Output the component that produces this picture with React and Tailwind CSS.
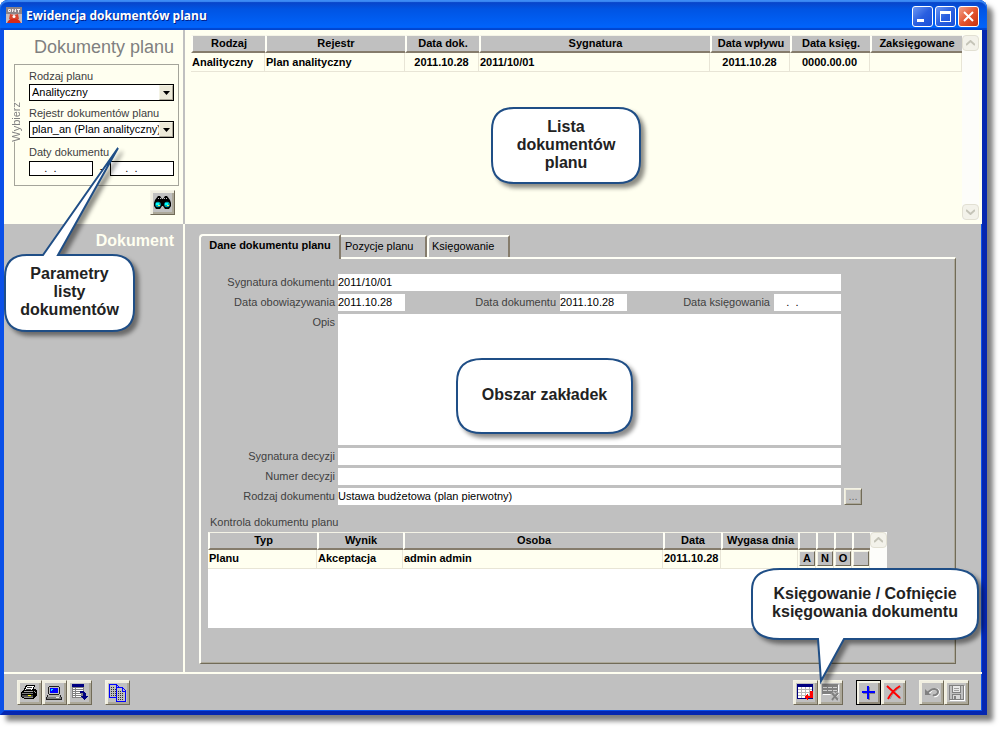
const FIELD =
  "h-[17px] min-w-0 rounded-none bg-white text-[11px] leading-4 text-black outline-none";

const DOCUMENTS = [
  {
    kind: "Analityczny",
    register: "Plan analityczny",
    date: "2011.10.28",
    signature: "2011/10/01",
    received: "2011.10.28",
    posted: "0000.00.00",
  },
];

const CHECKS = [
  {
    type: "Planu",
    result: "Akceptacja",
    person: "admin admin",
    date: "2011.10.28",
  },
];

const AppIcon = () => (
  <svg width="16" height="16" viewBox="0 0 16 16" aria-hidden="true">
    <rect width="16" height="16" fill="#8d8387" />
    <path d="M0 7h16v9H0z" fill="#c9bcbc" />
    <path d="M1 16c1-3 4-5 7-5s6 2 7 5z" fill="#d62a1a" />
    <path d="M4 7l4 1 4-1 1 5H3z" fill="#d8452f" />
    <circle cx="8" cy="9.500" r="1.500" fill="#fff" />
    <path
      d="M2.500 2.500h2v2h-2zM6.500 5V2l3 3V2M11 2.500h3M12.500 2v3.500"
      fill="none"
      stroke="#f3eded"
    />
  </svg>
);

const BinocularsIcon = () => (
  <svg width="17" height="13" viewBox="0 0 17 13" aria-hidden="true">
    <path
      d="M4 0h2l2 3h1l2-3h2l3 4 1 3v3l-2 3h-4l-2-3H8l-2 3H2l-2-3V7l1-3z"
      fill="#000"
    />
    <circle cx="4" cy="8.500" r="2.800" fill="#00a8b0" />
    <circle cx="13" cy="8.500" r="2.800" fill="#00a8b0" />
    <path d="M2 7h3v2H2zM11 7h3v2h-3z" fill="#0ff" />
    <path d="M4 9h2v1H4zM13 9h2v1h-2z" fill="#e8e860" />
    <path d="M4 2h1v1H4zM6 2h1v1H6zM10 2h1v1h-1zM12 2h1v1h-1z" fill="#c0c0c0" />
  </svg>
);

const PrinterIcon = () => (
  <svg width="17" height="15" viewBox="0 0 17 15" shapeRendering="crispEdges" aria-hidden="true">
    <path d="M5 0h9v2h-1v2h2v1h1v6h-1v1h-1v1h-1v1H3v-1H1v-1H0V7h1V6h1V5h1V3h1V1h1z" fill="#000" />
    <path d="M6 1h7v1h-1v2h-1v1H4V4h1V2h1z" fill="#fff" />
    <path d="M6 2h5v1H6zM5 4h5v1H5z" fill="#404040" />
    <path d="M3 6h9v1H3zM13 6h1v1h-1zM14 7h1v1h-1z" fill="#a0a0a0" />
    <path d="M1 8h11v1H1z" fill="#808080" />
    <path d="M1 10h11v2H1z" fill="#505050" />
    <path d="M7 10h3v1H7z" fill="#ff0" />
    <path d="M3 12h9v1H3z" fill="#909090" />
  </svg>
);

const ComputerIcon = () => (
  <svg width="17" height="14" viewBox="0 0 17 14" shapeRendering="crispEdges" aria-hidden="true">
    <path d="M3 0h10v1h1v7h-1v1h2v2h1v3H0v-3h1V9h2V8H2V1h1z" fill="#202020" />
    <path d="M3 1h10v7H3z" fill="#c0c0c0" />
    <path d="M4 2h8v5H4z" fill="#00f" />
    <path d="M5 3h2v1H6v1H5z" fill="#0ff" />
    <path d="M2 9h12v2H2z" fill="#b0b0b0" />
    <path d="M1 11h14v2H1z" fill="#808080" />
    <path d="M10 11h3v1h-3z" fill="#e8e8e8" />
  </svg>
);

const TableArrowIcon = () => (
  <svg width="17" height="17" viewBox="0 0 17 17" shapeRendering="crispEdges" aria-hidden="true">
    <path d="M1 3h12v11H1z" fill="#808080" />
    <path
      d="M2 4h2v1H2zM5 4h7v1H5zM2 6h2v1H2zM5 6h7v1H5zM2 8h2v1H2zM5 8h4v1H5zM2 10h2v1H2zM5 10h5v1H5zM2 12h2v1H2zM5 12h5v1H5z"
      fill="#fff"
    />
    <path d="M1 0h12v3H1z" fill="#000080" />
    <path d="M9 7h4v1h1v1h1v3h2v1h-1v1h-1v1h-1v1h-1v-1h-1v-1h-1v-1h-1v-1h2V9H9z" fill="#000080" />
  </svg>
);

const CopyIcon = () => (
  <svg width="18" height="18" viewBox="0 0 18 18" shapeRendering="crispEdges" aria-hidden="true">
    <path d="M.5.500h7l3 3v10H.500z" fill="#c0c0c0" stroke="#00f" />
    <path d="M7 1v3h3" fill="none" stroke="#00f" />
    <path d="M2 3.500h4M2 5.500h5M2 7.500h5M2 9.500h5M2 11.500h5" stroke="#303030" strokeDasharray="1 1" />
    <path d="M7.500 3.500h6l3 3v11h-9z" fill="#c0c0c0" stroke="#00f" />
    <path d="M13 4v3h4" fill="none" stroke="#00f" />
    <path d="M9 7.500h3M9 9.500h6M9 11.500h6M9 13.500h6M9 15.500h6" stroke="#303030" strokeDasharray="1 1" />
  </svg>
);

const PostIcon = () => (
  <svg width="17" height="17" viewBox="0 0 17 17" shapeRendering="crispEdges" aria-hidden="true">
    <path d="M0 0h16v15H0z" fill="#000080" />
    <path d="M1 3h14v11H1z" fill="#fff" />
    <path d="M1 5.500h14M1 8.500h14M1 11.500h14M4.500 3v11M8.500 3v11M12.500 3v11" stroke="#b8b8b8" />
    <path d="M13 7h3v7h-5v2h-1v-1H9v-1H8v-2h1v-1h1v-1h1v2h2z" fill="#f00" />
  </svg>
);

const UnpostIcon = () => (
  <svg width="18" height="17" viewBox="0 0 18 17" aria-hidden="true">
    <g shapeRendering="crispEdges">
      <path d="M1 1h16v10H1z" fill="#fff" />
      <path d="M0 0h16v10H0z" fill="#808080" />
      <path d="M1 3h4v1H1zM6 3h4v1H6zM11 3h4v1h-4zM1 6h4v1H1zM6 6h4v1H6zM11 6h4v1h-4z" fill="#d0d0d0" />
    </g>
    <path d="M10 9l7 7M17 9l-7 7" stroke="#c0c0c0" strokeWidth="5" />
    <path d="M11 10l6 6M17 10l-6 6" stroke="#fff" strokeWidth="1" />
    <path d="M10 9l6 7M16 9l-6 7" stroke="#808080" strokeWidth="2" />
  </svg>
);

const PlusIcon = () => (
  <svg width="15" height="15" viewBox="0 0 15 15" shapeRendering="crispEdges" aria-hidden="true">
    <path d="M7 2h2v5h5v2H9v6H7V9H2V7h5z" fill="#808080" />
    <path d="M6 1h2v5h6v2H8v6H6V8H1V6h5z" fill="#00f" />
  </svg>
);

const DeleteIcon = () => (
  <svg width="16" height="15" viewBox="0 0 16 15" aria-hidden="true">
    <path d="M3 3l12 11M15 2C10 5 6 9 4 14" stroke="#909090" strokeWidth="1" fill="none" />
    <path d="M1 1l13 12M14 1C9 4 5 8 2 14" stroke="#f00" strokeWidth="2" fill="none" />
  </svg>
);

const UndoIcon = () => (
  <svg width="16" height="11" viewBox="0 0 16 11" aria-hidden="true">
    <path d="M4 7l4-4c3-2 7-1 7 2 0 3-3 5-5 4" stroke="#fff" strokeWidth="2" fill="none" />
    <path d="M3 6l4-3c3-2 7-1 7 2 0 2-3 4-5 3" stroke="#808080" strokeWidth="2" fill="none" />
    <path d="M1 2v6h6z" fill="#808080" />
  </svg>
);

const SaveIcon = () => (
  <svg width="16" height="16" viewBox="0 0 16 16" shapeRendering="crispEdges" aria-hidden="true">
    <path d="M1.500 1.500h14v14h-14z" fill="none" stroke="#fff" />
    <path d="M.5.500h14v14H.500z" fill="#c0c0c0" stroke="#808080" />
    <path d="M3.500 1v6h8V1" fill="#e8e8e8" stroke="#808080" />
    <path d="M5 3.500h5M5 5.500h5" stroke="#a0a0a0" />
    <path d="M3 9h9v6H3z" fill="#808080" />
    <path d="M4 10h7v4H4z" fill="#d8d8d8" />
    <path d="M5 11h2v4H5z" fill="#808080" />
  </svg>
);

const ToolButton = ({ label, focused, children }) => (
  <button
    type="button"
    aria-label={label}
    className={`flex size-[25px] items-center justify-center bg-[#c0c0c0] ${
      focused
        ? "border border-black shadow-[inset_2px_2px_#f4f3e6,inset_-2px_-2px_#8f8878]"
        : "border border-t-[#f4f3e6] border-l-[#f4f3e6] border-r-[#716b58] border-b-[#716b58] shadow-[inset_2px_2px_#f0eee0,inset_-2px_-2px_#aca899]"
    }`}
  >
    {children}
  </button>
);

const ScrollButton = ({ down }) => (
  <button
    type="button"
    aria-label={down ? "W dół" : "W górę"}
    className="flex h-4 w-[17px] shrink-0 items-center justify-center rounded-sm border border-[#e2e0d3] bg-[#f3f2ea]"
  >
    <svg width="9" height="6" viewBox="0 0 9 6" aria-hidden="true">
      <path
        d={down ? "M0 1l4.500 4L9 1" : "M0 5l4.500-4L9 5"}
        fill="none"
        stroke="#c5c4b8"
        strokeWidth="2"
      />
    </svg>
  </button>
);

const Th = ({ children, label }) => (
  <th
    aria-label={label}
    className="h-[18px] overflow-hidden border-t border-b-2 border-l-2 border-t-[#f4f3e6] border-b-[#857c6c] border-l-[#fffff6] bg-[#c0c0c0] p-0 text-center leading-[15px] font-bold whitespace-nowrap"
  >
    {children}
  </th>
);

const Td = ({ children, center }) => (
  <td
    className={`h-[19px] overflow-hidden border-r border-b border-[#e8e5d6] bg-[#fffff0] px-px py-0 leading-[15px] whitespace-nowrap ${
      center ? "text-center" : "text-left"
    }`}
  >
    {children}
  </td>
);

const SelectBox = ({ id, label, value, className }) => (
  <div className={className}>
    <label htmlFor={id} className="block leading-4 text-[#404040]">
      {label}
    </label>
    <div className="flex h-[17px] border border-black bg-white">
      <select
        id={id}
        className="min-w-0 flex-1 appearance-none overflow-hidden pl-0.5 text-[11px] leading-[15px] text-black outline-none"
      >
        <option>{value}</option>
      </select>
      <span className="flex w-[14px] shrink-0 items-center justify-center border border-t-[#f4f3e6] border-r-[#aca899] border-b-[#aca899] border-l-[#f4f3e6] bg-[#ece9d8]">
        <svg width="7" height="4" viewBox="0 0 7 4" aria-hidden="true">
          <path d="M0 0h7L3.500 4z" />
        </svg>
      </span>
    </div>
  </div>
);

const Callout = ({ width, height, path, className, children }) => (
  <div className={`absolute z-20 flex items-center justify-center ${className}`}>
    <svg
      width={width}
      height={height}
      viewBox={`0 0 ${width} ${height}`}
      className="absolute top-0 left-0 overflow-visible drop-shadow-[4px_4px_2px_rgba(0,0,0,0.45)]"
      aria-hidden="true"
    >
      <path d={path} fill="#fff" stroke="#1f4e86" strokeWidth="2" />
    </svg>
    <p className="relative pb-0.5 text-center text-[16px] leading-[18px] font-bold text-[#222]">
      {children}
    </p>
  </div>
);

const TitleBar = () => (
  <header className="flex h-[30px] items-center rounded-t-lg bg-linear-to-b from-[#0a3fc0] via-[#0054e3] via-30% to-[#0066ff] pr-2 pl-[6px] shadow-[inset_0_2px_1px_#3d8cf5,inset_0_-2px_1px_#0045d0]">
    <AppIcon />
    <h1 className="ml-1 flex-1 pt-0.5 font-['Open_Sans','Noto_Sans',sans-serif] text-[12px] font-bold text-white [text-shadow:1px_1px_#00208a]">
      Ewidencja dokumentów planu
    </h1>
    <div className="flex gap-0.5 pt-0.5">
      <button
        type="button"
        aria-label="Minimalizuj"
        className="size-[21px] rounded-[3px] border border-white bg-linear-to-br from-[#6c96f2] via-[#2a5fe0] to-[#1a4fd8]"
      >
        <svg width="19" height="19" aria-hidden="true">
          <path d="M4 12h7v3H4z" fill="#fff" />
        </svg>
      </button>
      <button
        type="button"
        aria-label="Maksymalizuj"
        className="size-[21px] rounded-[3px] border border-white bg-linear-to-br from-[#6c96f2] via-[#2a5fe0] to-[#1a4fd8]"
      >
        <svg width="19" height="19" shapeRendering="crispEdges" aria-hidden="true">
          <path d="M4 4h11v11H4zM5 7v7h9V7z" fill="#fff" fillRule="evenodd" />
        </svg>
      </button>
      <button
        type="button"
        aria-label="Zamknij"
        className="size-[21px] rounded-[3px] border border-white bg-linear-to-br from-[#f0a088] via-[#e4552f] to-[#c8300a]"
      >
        <svg width="19" height="19" aria-hidden="true">
          <path d="M5 5l9 9M14 5l-9 9" stroke="#fff" strokeWidth="2" />
        </svg>
      </button>
    </div>
  </header>
);

const FilterPanel = () => (
  <aside className="flex w-[179px] shrink-0 flex-col pt-2 pr-1 pb-[9px] pl-[10px]">
    <h2 className="pr-[5px] text-right text-[18px] leading-[18px] whitespace-nowrap text-[#808080]">
      Dokumenty planu
    </h2>
    <fieldset
      aria-label="Wybierz"
      className="relative mt-2 min-w-0 border border-[#a5a59b] pt-[3px] pr-1 pb-2 pl-[14px]"
    >
      <span className="absolute top-[37px] -left-2 rotate-180 bg-[#fffff0] py-0.5 leading-[14px] text-[#808080] [writing-mode:vertical-rl]">
        Wybierz
      </span>
      <SelectBox id="plan-kind" label="Rodzaj planu" value="Analityczny" />
      <SelectBox
        id="plan-register"
        label="Rejestr dokumentów planu"
        value="plan_an (Plan analityczny)"
        className="mt-1"
      />
      <label htmlFor="date-from" className="mt-[6px] block leading-4 text-[#404040]">
        Daty dokumentu
      </label>
      <div className="flex items-center justify-between">
        <input
          id="date-from"
          defaultValue="    .  ."
          className="h-[15px] w-16 border border-black bg-white px-0.5 text-[11px] outline-none"
        />
        <span>-</span>
        <input
          aria-label="Data do"
          defaultValue="    .  ."
          className="h-[15px] w-16 border border-black bg-white px-0.5 text-[11px] outline-none"
        />
      </div>
    </fieldset>
    <div className="mt-1 flex justify-end pr-1">
      <ToolButton label="Szukaj">
        <BinocularsIcon />
      </ToolButton>
    </div>
  </aside>
);

const DocumentList = () => (
  <section className="flex min-w-0 flex-1 border-l-2 border-[#c0c0c0] pt-[5px] pr-[3px] pb-1 pl-[6px]">
    <div className="min-w-0 flex-1">
      <table className="w-full table-fixed border-separate border-spacing-0">
        <colgroup>
          <col className="w-[74px]" />
          <col className="w-[140px]" />
          <col className="w-[74px]" />
          <col />
          <col className="w-20" />
          <col className="w-20" />
          <col className="w-[92px]" />
        </colgroup>
        <thead>
          <tr>
            <Th>Rodzaj</Th>
            <Th>Rejestr</Th>
            <Th>Data dok.</Th>
            <Th>Sygnatura</Th>
            <Th>Data wpływu</Th>
            <Th>Data księg.</Th>
            <Th>Zaksięgowane</Th>
          </tr>
        </thead>
        <tbody className="font-bold">
          {DOCUMENTS.map((doc) => (
            <tr key={doc.signature}>
              <Td>{doc.kind}</Td>
              <Td>{doc.register}</Td>
              <Td center>{doc.date}</Td>
              <Td>{doc.signature}</Td>
              <Td center>{doc.received}</Td>
              <Td center>{doc.posted}</Td>
              <Td />
            </tr>
          ))}
        </tbody>
      </table>
    </div>
    <div className="flex flex-col justify-between bg-[#fdfdfa]">
      <ScrollButton />
      <ScrollButton down />
    </div>
  </section>
);

const FormLabel = ({ htmlFor, children, className = "" }) => (
  <label
    htmlFor={htmlFor}
    className={`text-right leading-4 whitespace-nowrap text-[#404040] ${className}`}
  >
    {children}
  </label>
);

const DocumentForm = () => (
  <div className="grid grid-cols-[127px_1fr_18px] gap-[3px] pr-[25px]">
    <FormLabel htmlFor="signature">Sygnatura dokumentu</FormLabel>
    <input id="signature" defaultValue="2011/10/01" className={FIELD} />
    <span />

    <FormLabel htmlFor="valid-from">Data obowiązywania</FormLabel>
    <div className="flex min-w-0">
      <input id="valid-from" defaultValue="2011.10.28" className={`${FIELD} w-[67px]`} />
      <FormLabel htmlFor="doc-date" className="w-[155px] pr-1">
        Data dokumentu
      </FormLabel>
      <input id="doc-date" defaultValue="2011.10.28" className={`${FIELD} w-[67px]`} />
      <FormLabel htmlFor="post-date" className="flex-1 pr-1">
        Data księgowania
      </FormLabel>
      <input id="post-date" defaultValue="    .  ." className={`${FIELD} w-[67px]`} />
    </div>
    <span />

    <FormLabel htmlFor="description">Opis</FormLabel>
    <textarea
      id="description"
      className="h-[131px] resize-none bg-white text-[11px] outline-none"
    />
    <span />

    <FormLabel htmlFor="decision-signature">Sygnatura decyzji</FormLabel>
    <input id="decision-signature" className={FIELD} />
    <span />

    <FormLabel htmlFor="decision-number">Numer decyzji</FormLabel>
    <input id="decision-number" className={FIELD} />
    <span />

    <FormLabel htmlFor="doc-kind">Rodzaj dokumentu</FormLabel>
    <input
      id="doc-kind"
      defaultValue="Ustawa budżetowa (plan pierwotny)"
      className={FIELD}
    />
    <button
      type="button"
      className="h-[17px] border border-t-[#f4f3e6] border-r-[#716b58] border-b-[#716b58] border-l-[#f4f3e6] bg-[#c0c0c0] leading-3 text-[#707070] shadow-[inset_1px_1px_#ece9d8,inset_-1px_-1px_#aca899]"
    >
      ...
    </button>
  </div>
);

const RowButton = ({ children, label }) => (
  <button
    type="button"
    aria-label={label}
    className="block h-[15px] w-4 border border-t-[#f4f3e6] border-r-[#716b58] border-b-[#716b58] border-l-[#f4f3e6] bg-[#c0c0c0] text-center text-[11px] leading-[13px] font-bold"
  >
    {children}
  </button>
);

const CheckList = () => (
  <section>
    <h3 className="mt-[9px] pl-0.5 leading-4 text-[#404040]">Kontrola dokumentu planu</h3>
    <div className="mt-0.5 flex min-h-24 bg-white">
      <div className="min-w-0 flex-1">
        <table className="w-full table-fixed border-separate border-spacing-0">
          <colgroup>
            <col className="w-[109px]" />
            <col className="w-[86px]" />
            <col />
            <col className="w-[58px]" />
            <col className="w-[77px]" />
            <col className="w-[18px]" />
            <col className="w-[18px]" />
            <col className="w-[18px]" />
            <col className="w-[18px]" />
          </colgroup>
          <thead>
            <tr>
              <Th>Typ</Th>
              <Th>Wynik</Th>
              <Th>Osoba</Th>
              <Th>Data</Th>
              <Th>Wygasa dnia</Th>
              <Th label="Akceptuj" />
              <Th label="Negatywny" />
              <Th label="Odrzuć" />
              <Th label="Inne" />
            </tr>
          </thead>
          <tbody className="font-bold">
            {CHECKS.map((check) => (
              <tr key={check.type}>
                <Td>{check.type}</Td>
                <Td>{check.result}</Td>
                <Td>{check.person}</Td>
                <Td>{check.date}</Td>
                <Td />
                <Td>
                  <RowButton>A</RowButton>
                </Td>
                <Td>
                  <RowButton>N</RowButton>
                </Td>
                <Td>
                  <RowButton>O</RowButton>
                </Td>
                <Td>
                  <RowButton label="Inne" />
                </Td>
              </tr>
            ))}
          </tbody>
        </table>
      </div>
      <div className="flex flex-col justify-between bg-[#fdfdfa]">
        <ScrollButton />
        <ScrollButton down />
      </div>
    </div>
  </section>
);

const DocumentTabs = () => (
  <section className="flex min-w-0 flex-1 flex-col border-l-2 border-[#fffff0] pt-[10px] pr-[26px] pb-2 pl-[14px]">
    <div role="tablist" className="flex items-end">
      <button
        type="button"
        role="tab"
        aria-selected="true"
        className="relative z-10 -mb-0.5 h-[25px] w-[142px] rounded-tl-sm border-t-2 border-r-2 border-l-2 border-t-[#fffff6] border-r-[#857c6c] border-l-[#fffff6] bg-[#c0c0c0] pb-1 font-bold whitespace-nowrap"
      >
        Dane dokumentu planu
      </button>
      <button
        type="button"
        role="tab"
        aria-selected="false"
        className="h-[22px] w-[86px] border-t-2 border-r-2 border-t-[#fffff6] border-r-[#857c6c] pl-1 text-left"
      >
        Pozycje planu
      </button>
      <button
        type="button"
        role="tab"
        aria-selected="false"
        className="h-[22px] w-[83px] rounded-tl-sm border-t-2 border-r-2 border-l-2 border-t-[#fffff6] border-r-[#857c6c] border-l-[#fffff6] pl-[3px] text-left"
      >
        Księgowanie
      </button>
    </div>
    <div
      role="tabpanel"
      className="flex-1 border-t-2 border-r border-b border-l-2 border-t-[#fffff6] border-r-[#716b58] border-b-[#716b58] border-l-[#fffff6] pt-[15px] pr-[68px] pb-[34px] pl-[7px] shadow-[inset_-1px_-1px_#aca899]"
    >
      <DocumentForm />
      <CheckList />
    </div>
  </section>
);

const Toolbar = () => (
  <footer className="flex h-[39px] shrink-0 items-center justify-between border-t-2 border-[#fffff0] pr-[13px] pl-[13px]">
    <div className="flex gap-[13px]">
      <div className="flex">
        <ToolButton label="Drukuj">
          <PrinterIcon />
        </ToolButton>
        <ToolButton label="Ekran">
          <ComputerIcon />
        </ToolButton>
        <ToolButton label="Eksport">
          <TableArrowIcon />
        </ToolButton>
      </div>
      <ToolButton label="Kopiuj">
        <CopyIcon />
      </ToolButton>
    </div>
    <div className="flex gap-[13px]">
      <div className="flex">
        <ToolButton label="Księguj">
          <PostIcon />
        </ToolButton>
        <ToolButton label="Cofnij księgowanie">
          <UnpostIcon />
        </ToolButton>
      </div>
      <div className="flex">
        <ToolButton label="Dodaj" focused>
          <PlusIcon />
        </ToolButton>
        <ToolButton label="Usuń">
          <DeleteIcon />
        </ToolButton>
      </div>
      <div className="flex">
        <ToolButton label="Cofnij">
          <UndoIcon />
        </ToolButton>
        <ToolButton label="Zapisz">
          <SaveIcon />
        </ToolButton>
      </div>
    </div>
  </footer>
);

const App = () => {
  return (
    <div className="flex min-h-screen bg-white pr-[14px] pb-[15px] font-['Liberation_Sans',Arial,sans-serif] text-[11px] text-black">
      <div className="relative flex min-w-0 flex-1 flex-col rounded-t-lg bg-[#0a3fd8] shadow-[6px_6px_5px_rgba(0,0,0,0.5)]">
        <TitleBar />
        <main className="flex flex-1 flex-col border-r-[5px] border-b-4 border-l-4 border-r-[#0526b0] border-b-[#0526b0] border-l-[#0a50e8] bg-[#c0c0c0] shadow-[inset_-1px_-1px_#0a50e8]">
          <div className="flex bg-[#fffff0]">
            <FilterPanel />
            <DocumentList />
          </div>
          <div className="flex flex-1">
            <aside className="w-[179px] shrink-0 pt-2 pr-[9px] text-right">
              <h2 className="text-[16px] leading-[18px] font-bold text-[#fffff0]">Dokument</h2>
            </aside>
            <DocumentTabs />
          </div>
          <Toolbar />
        </main>

        <Callout
          width={150}
          height={77}
          path="M23 1H127Q149 1 149 23V54Q149 76 127 76H23Q1 76 1 54V23Q1 1 23 1Z"
          className="top-[107px] left-[491px] h-[77px] w-[150px]"
        >
          Lista
          <br />
          dokumentów
          <br />
          planu
        </Callout>
        <Callout
          width={131}
          height={78}
          path="M23 1H39L114 -106L54 1H108Q130 1 130 23V55Q130 77 108 77H23Q1 77 1 55V23Q1 1 23 1Z"
          className="top-[254px] left-1 h-[78px] w-[131px]"
        >
          Parametry
          <br />
          listy
          <br />
          dokumentów
        </Callout>
        <Callout
          width={177}
          height={76}
          path="M26 1H151Q176 1 176 24V52Q176 75 151 75H26Q1 75 1 52V24Q1 1 26 1Z"
          className="top-[358px] left-[456px] h-[76px] w-[177px]"
        >
          Obszar zakładek
        </Callout>
        <Callout
          width={228}
          height={72}
          path="M29 1H199Q227 1 227 22V50Q227 71 199 71H93L70 113L67 71H29Q1 71 1 50V22Q1 1 29 1Z"
          className="right-2 bottom-[75px] h-[72px] w-[228px]"
        >
          Księgowanie / Cofnięcie
          <br />
          księgowania dokumentu
        </Callout>
      </div>
    </div>
  );
};

export default App;
